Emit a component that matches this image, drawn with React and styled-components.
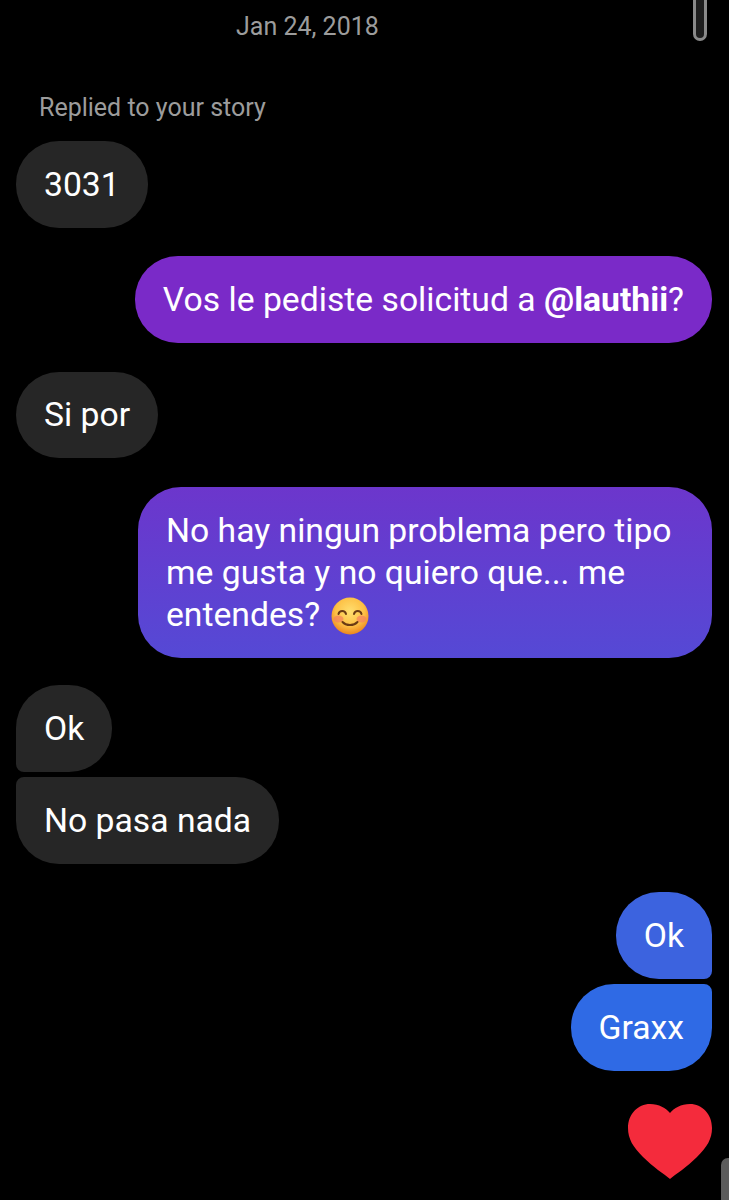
import React from "react";
import styled, { createGlobalStyle } from "styled-components";

const Global = createGlobalStyle`
  html, body { margin: 0; padding: 0; background: #000; }
  body { font-family: Roboto, "Noto Sans", sans-serif; }
`;

const Screen = styled.div`
  position: relative;
  width: 729px;
  height: 1200px;
  overflow: hidden;
  background: #000;
  box-sizing: border-box;
  padding: 10px 17px 0 16px;
  display: flex;
  flex-direction: column;
`;

const DateLabel = styled.div`
  padding-left: 220px;
  font-size: 25px;
  line-height: 34px;
  color: #9c9c9c;
`;

const ReplyNote = styled.div`
  margin: 47px 0 0 23px;
  font-size: 25px;
  line-height: 34px;
  color: #9c9c9c;
`;

const Row = styled.div`
  display: flex;
  justify-content: ${(p) => (p.$mine ? "flex-end" : "flex-start")};
  margin-top: ${(p) => p.$gap}px;
`;

const Bubble = styled.div`
  box-sizing: border-box;
  padding: 22.5px 28px 22px;
  width: ${(p) => (p.$width ? `${p.$width}px` : "auto")};
  font-size: 33.7px;
  line-height: 42px;
  color: #fff;
  background: ${(p) => p.$bg};
  border-radius: ${(p) => p.$radius || "43px"};
`;

const Mention = styled.strong`
  font-weight: 700;
`;

const Emoji = styled.svg`
  width: 38px;
  height: 38px;
  margin: -8px 0 -8px 2px;
  vertical-align: -1px;
`;

const Heart = styled.svg`
  display: block;
  width: 84px;
  height: 75px;
`;

const ScrollHandle = styled.div`
  position: absolute;
  top: -8px;
  left: 693px;
  width: 14px;
  height: 49px;
  box-sizing: border-box;
  border: 3px solid #8a8a8a;
  background: #1e1e1e;
  border-radius: 7px;
`;

const CornerHandle = styled.div`
  position: absolute;
  top: 1158px;
  left: 721px;
  width: 14px;
  height: 50px;
  background: #5c5c5c;
  border-radius: 7px;
`;

const GREY = "#262626";

export default function App() {
  return (
    <Screen>
      <Global />
      <ScrollHandle />
      <CornerHandle />
      <DateLabel>Jan 24, 2018</DateLabel>
      <ReplyNote>Replied to your story</ReplyNote>
      <Row $gap={16}>
        <Bubble $bg={GREY}>3031</Bubble>
      </Row>
      <Row $mine $gap={28.5}>
        <Bubble $bg="#7a2ac8">
          Vos le pediste solicitud a <Mention>@lauthii</Mention>?
        </Bubble>
      </Row>
      <Row $gap={29}>
        <Bubble $bg={GREY}>Si por</Bubble>
      </Row>
      <Row $mine $gap={29}>
        <Bubble $bg="linear-gradient(180deg, #6c36cc 0%, #5549d5 100%)" $width={574}>
          No hay ningun problema pero tipo me gusta y no quiero que... me entendes?{" "}
          <Emoji viewBox="0 0 38 38">
            <defs>
              <radialGradient id="face" cx="50%" cy="38%" r="60%">
                <stop offset="0%" stopColor="#ffdf70" />
                <stop offset="65%" stopColor="#fdc045" />
                <stop offset="100%" stopColor="#ee8a20" />
              </radialGradient>
            </defs>
            <circle cx="19" cy="19" r="18.5" fill="url(#face)" />
            <ellipse cx="7.500" cy="22" rx="5" ry="3.500" fill="#f5805c" opacity="0.7" />
            <ellipse cx="30.500" cy="22" rx="5" ry="3.500" fill="#f5805c" opacity="0.7" />
            <path d="M7.500 17c1-4 6.500-4 7.500 0M23 17c1-4 6.500-4 7.500 0" fill="none" stroke="#6b3b14" strokeWidth="2" strokeLinecap="round" />
            <path d="M11.500 25c3.500 4 11.500 4 15 0" fill="none" stroke="#6b3b14" strokeWidth="2" strokeLinecap="round" />
          </Emoji>
        </Bubble>
      </Row>
      <Row $gap={27.5}>
        <Bubble $bg={GREY} $radius="43px 43px 43px 8px">Ok</Bubble>
      </Row>
      <Row $gap={5.5}>
        <Bubble $bg={GREY} $radius="8px 43px 43px 43px">No pasa nada</Bubble>
      </Row>
      <Row $mine $gap={28.5}>
        <Bubble $bg="#3c63df" $radius="43px 43px 8px 43px">Ok</Bubble>
      </Row>
      <Row $mine $gap={5.5}>
        <Bubble $bg="#2f6ae5" $radius="43px 8px 43px 43px">Graxx</Bubble>
      </Row>
      <Row $mine $gap={33.5}>
        <Heart viewBox="0 0 84 75">
          <path
            d="M42 75C36 70 25 63 15 53C5 43 0 35 0 24C0 10 10 0 22 0C31 0 38 4 42 9C46 4 53 0 62 0C74 0 84 10 84 24C84 35 79 43 69 53C59 63 48 70 42 75Z"
            fill="#f42b3c"
          />
        </Heart>
      </Row>
    </Screen>
  );
}
